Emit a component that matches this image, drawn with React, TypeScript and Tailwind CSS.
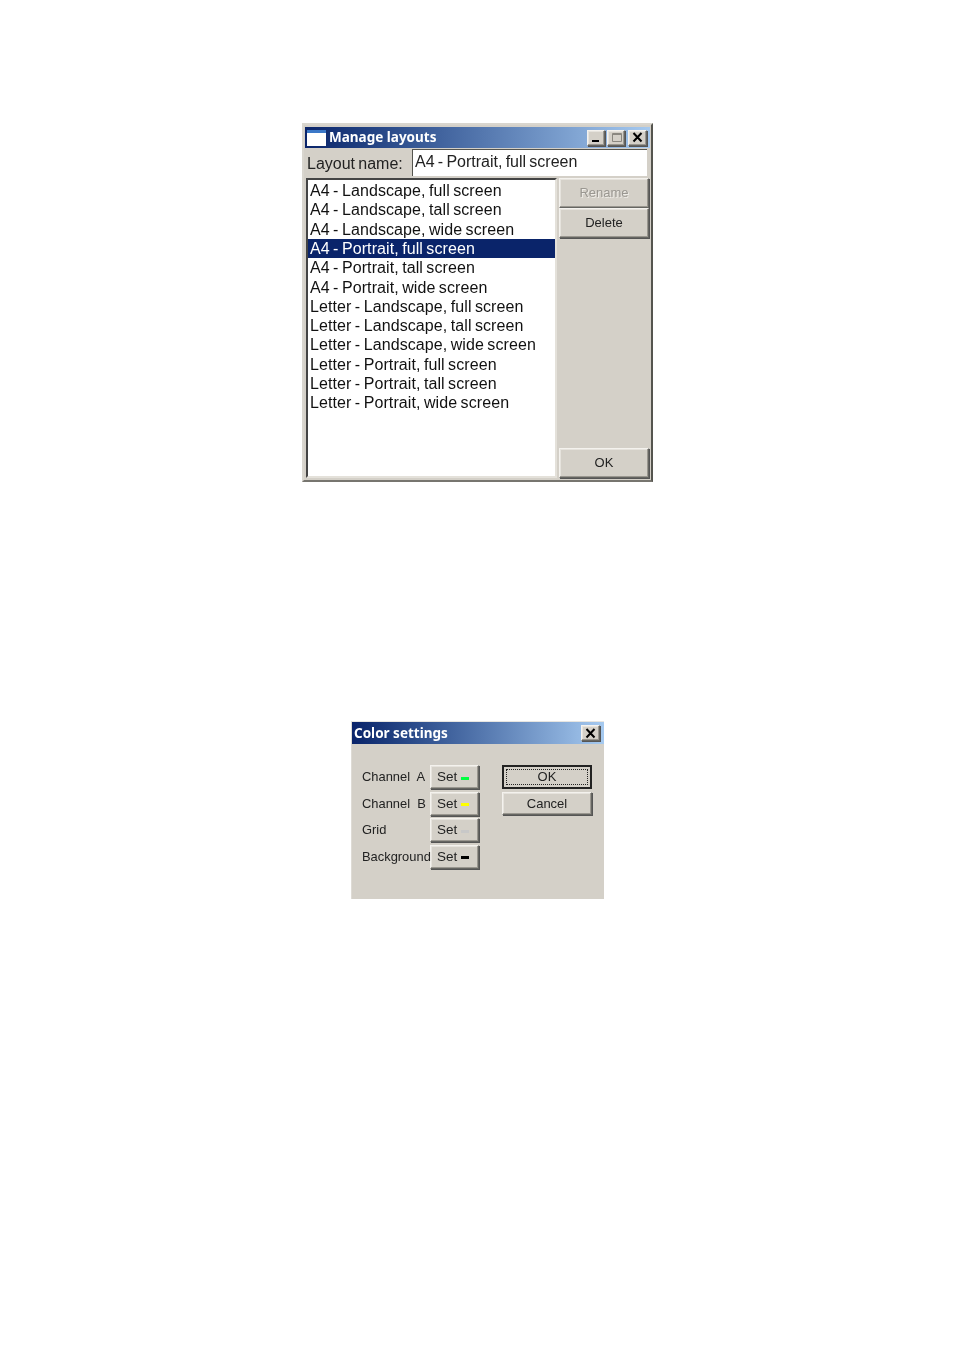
const font = "font-['Liberation_Sans',Arial,sans-serif]";
const titleFont = "font-['Noto_Sans',sans-serif]";
const raised = "border border-t-[#f4f2ee] border-l-[#f4f2ee] border-r-[#666662] border-b-[#666662] shadow-[inset_-1px_-1px_0_#9a9790,inset_1px_1px_0_#e6e3dd,1px_1px_0_#555]";

const layouts = [
  "A4 - Landscape, full screen",
  "A4 - Landscape, tall screen",
  "A4 - Landscape, wide screen",
  "A4 - Portrait, full screen",
  "A4 - Portrait, tall screen",
  "A4 - Portrait, wide screen",
  "Letter - Landscape, full screen",
  "Letter - Landscape, tall screen",
  "Letter - Landscape, wide screen",
  "Letter - Portrait, full screen",
  "Letter - Portrait, tall screen",
  "Letter - Portrait, wide screen",
];

function CaptionButton({ kind }: { kind: "min" | "max" | "close" }) {
  return (
    <div className={`${kind === "close" ? "w-[19px]" : "w-[18px]"} h-[16px] bg-[#d4d0c8] flex items-center justify-center ${raised}`}>
      <svg width="13" height="11" viewBox="0 0 13 11">
        {kind === "min" && <rect x="2" y="8" width="7" height="2" fill="#000" />}
        {kind === "max" && <path d="M2.5 1.5h9v8h-9z M2.5 2.5h9" fill="none" stroke="#8a8780" strokeWidth="1" />}
        {kind === "close" && <path d="M2.5 1l8 8.5M10.5 1l-8 8.5" stroke="#000" strokeWidth="2" />}
      </svg>
    </div>
  );
}

function Btn({ children, className = "" }: { children: React.ReactNode; className?: string }) {
  return <div className={`bg-[#d4d0c8] flex items-center justify-center text-[13px] text-[#222] ${raised} ${className}`}>{children}</div>;
}

function SetRow({ label, color }: { label: string; color: string }) {
  return (
    <div className="flex items-start h-[26.67px]">
      <div className="relative z-10 w-[68px] text-[12.9px] leading-[23px] whitespace-pre text-[#222]">{label}</div>
      <div className={`w-[49px] h-[24px] bg-[#d4d0c8] flex items-center pl-[6px] gap-[4px] text-[13.5px] text-[#222] ${raised}`}>
        <span>Set</span>
        <span className="w-[8px] h-[3px] mt-[2px]" style={{ backgroundColor: color }} />
      </div>
    </div>
  );
}

export default function App() {
  return (
    <div className={`w-[954px] h-[1350px] bg-white overflow-hidden pt-[123px] ${font}`}>
      <div className="ml-[302px] w-[351px] h-[359px] bg-[#d4d0c8] border-2 border-t-[#d9d6cf] border-l-[#d9d6cf] border-r-[#55554f] border-b-[#77756f] pt-[2px] pb-[2px] px-[1px] flex flex-col blur-[0.3px]">
        <div className="h-[21px] shrink-0 flex items-center pl-[2px] pr-[3px] bg-gradient-to-r from-[#0a246a] to-[#a6caf0]">
          <div className="w-[19px] h-[16px] bg-white border-t-[3px] border-[#3b78c8] mr-[3px]" />
          <span className={`text-white text-[13.5px] font-bold ${titleFont}`}>Manage layouts</span>
          <div className="ml-auto flex">
            <CaptionButton kind="min" />
            <div className="w-[2px]" />
            <CaptionButton kind="max" />
            <div className="w-[3px]" />
            <CaptionButton kind="close" />
          </div>
        </div>
        <div className="flex items-center h-[27px] mt-[1px] mb-[2px] shrink-0">
          <span className="w-[107px] text-[16px] leading-[27px] pt-[1px] text-[#222] whitespace-nowrap pl-[2px] [word-spacing:-1.2px]">Layout name:</span>
          <div className="w-[235px] h-[27px] bg-white border-t border-l border-[#55554f] pl-[2px] text-[16px] leading-[24px] text-[#222] whitespace-nowrap [word-spacing:-1.2px]">A4 - Portrait, full screen</div>
        </div>
        <div className="h-[300px] flex">
          <div className="ml-[1px] w-[251px] bg-white border-2 border-t-[#444] border-l-[#444] border-r-[#e4e1da] border-b-[#e4e1da] pt-[1.2px]">
            {layouts.map((name, i) => (
              <div key={name} className={`h-[19.27px] pl-[2px] text-[16px] leading-[20px] whitespace-nowrap [word-spacing:-1.2px] tracking-[0.1px] ${i === 3 ? "bg-[#0a246a] text-white" : "text-[#111]"}`}>{name}</div>
            ))}
          </div>
          <div className="ml-[2px] w-[90px] flex flex-col">
            <Btn className="h-[30px] !text-[#9a9791] [text-shadow:1px_1px_0_#efede8]">Rename</Btn>
            <Btn className="h-[30px]">Delete</Btn>
            <Btn className="h-[30px] mt-auto">OK</Btn>
          </div>
        </div>
      </div>

      <div className="mt-[239px] ml-[351px] w-[253px] h-[178px] bg-[#d4d0c8] border-t border-l border-t-[#e8e6e1] border-l-[#dedbd5] flex flex-col blur-[0.3px]">
        <div className="h-[22px] shrink-0 flex items-center pl-[2px] pr-[3px] bg-gradient-to-r from-[#0a246a] to-[#a6caf0]">
          <span className={`text-white text-[13.5px] font-bold ${titleFont}`}>Color settings</span>
          <div className="ml-auto mr-[1px]"><CaptionButton kind="close" /></div>
        </div>
        <div className="flex pl-[10px] pt-[21px]">
          <div className="flex flex-col">
            <SetRow label="Channel  A" color="#00ff40" />
            <SetRow label="Channel  B" color="#ffff00" />
            <SetRow label="Grid" color="#c8c8c8" />
            <SetRow label="Background" color="#000000" />
          </div>
          <div className="ml-[23px] w-[90px] flex flex-col gap-[3px]">
            <div className="h-[24px] bg-[#d4d0c8] border-2 border-[#222] flex items-center justify-center p-[2px]">
              <div className="w-full h-full border border-dotted border-[#222] flex items-center justify-center text-[13px] text-[#222]">OK</div>
            </div>
            <Btn className="h-[23px]">Cancel</Btn>
          </div>
        </div>
      </div>
    </div>
  );
}
